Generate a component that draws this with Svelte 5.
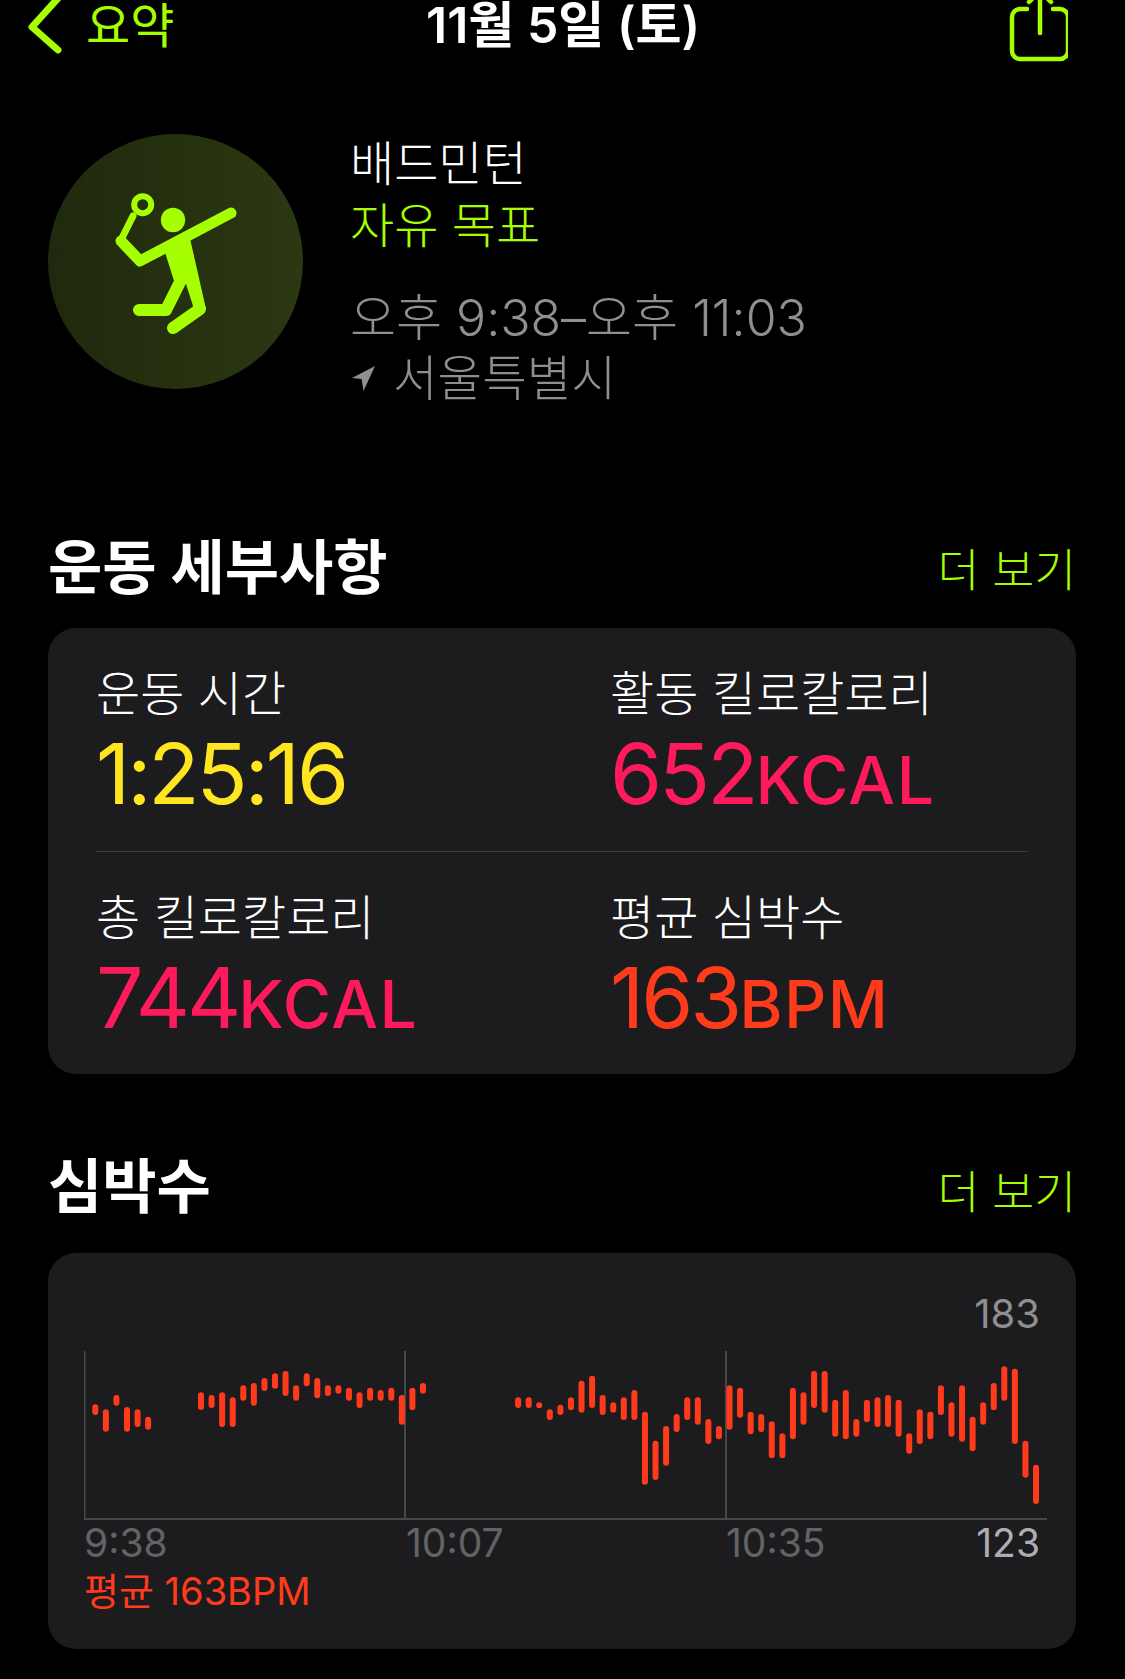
<script>
	const PITCH = 10.57;
	const TOP = 1352;

	// [top, bottom] of each minute's range, in screen px; null = no reading
	const raw = [
		[376, 408], [391, 458], [348, 380], [384, 458], [391, 444], [413, 452], null, null, null, null,
		[340, 393], [348, 387], [340, 444], [355, 444], [319, 365], [312, 380], [297, 336], [283, 329],
		[276, 351], [319, 365], [283, 322], [297, 358], [319, 351], [319, 344], [326, 365], [340, 387],
		[326, 365], [333, 365], [326, 365], [348, 437], [326, 394], [312, 344], null, null, null, null,
		null, null, null, null, [355, 387], [355, 387], [370, 387], [391, 423], [377, 408], [355, 394],
		[305, 401], [290, 387], [348, 408], [370, 401], [355, 423], [333, 423], [398, 617], [485, 603],
		[441, 560], [405, 459], [355, 423], [355, 437], [420, 495], [441, 481], [319, 452], [326, 416],
		[398, 466], [405, 459], [427, 538], [463, 538], [326, 481], [340, 437], [276, 387], [276, 401],
		[362, 473], [333, 481], [420, 473], [362, 430], [355, 444], [348, 444], [362, 473], [463, 524],
		[391, 495], [398, 481], [319, 408], [370, 473], [319, 488], [413, 517], [370, 437], [312, 394],
		[262, 365], [269, 495], [485, 596], [557, 675]
	];

	const bars = raw
		.map((r, i) => (r ? { x: 11.3 + i * PITCH, y: 1280 + r[0] / 3 - TOP, h: (r[1] - r[0]) / 3 } : null))
		.filter(Boolean);

	const stats = [
		{ label: '운동 시간', value: '1:25:16', unit: '', tone: 'yellow' },
		{ label: '활동 킬로칼로리', value: '652', unit: 'KCAL', tone: 'pink' },
		{ label: '총 킬로칼로리', value: '744', unit: 'KCAL', tone: 'pink' },
		{ label: '평균 심박수', value: '163', unit: 'BPM', tone: 'red' }
	];
</script>

<div class="page">
	<header class="nav">
		<div class="back">
			<svg class="chevron" viewBox="0 0 40 54" width="40" height="54">
				<polyline points="34,-4 6,27 32,50" />
			</svg>
			<span>요약</span>
		</div>
		<div class="title">11월 5일 (토)</div>
		<svg class="share" viewBox="0 0 64 64" width="64" height="64">
			<path d="M23 9h-7a8 8 0 0 0-8 8v34a8 8 0 0 0 8 8h40a8 8 0 0 0 8-8V17a8 8 0 0 0-8-8h-7" />
			<path d="M36 33V-6M25 2l11-11 11 11" />
		</svg>
	</header>

	<section class="hero">
		<svg class="badge" viewBox="48 134 255 255" width="255" height="255">
			<defs>
				<linearGradient id="badgeFill" x1="0" y1="0" x2="1" y2="0">
					<stop offset="0" stop-color="#1f290d" />
					<stop offset="1" stop-color="#2c3812" />
				</linearGradient>
			</defs>
			<circle cx="175.5" cy="261.5" r="127.5" fill="url(#badgeFill)" />
			<g fill="none" stroke="#a6ff00" stroke-linecap="round" stroke-linejoin="round">
				<circle cx="142.7" cy="204.7" r="8.5" stroke-width="6" />
				<path d="M133 216L121 240" stroke-width="7" />
				<path d="M121 241L140 261L231 213" stroke-width="11" />
				<path d="M139 310H166L182 278" stroke-width="12" />
				<path d="M200 309L173 328" stroke-width="12" />
			</g>
			<circle cx="173" cy="220" r="12.2" fill="#a6ff00" />
			<path d="M163 246L189 234L206 309L195 312L186 284L175 284Z" fill="#a6ff00" />
		</svg>
		<div class="info">
			<div class="name">배드민턴</div>
			<div class="goal">자유 목표</div>
			<div class="time">오후 9:38–오후 11:03</div>
			<div class="place">
				<svg viewBox="354 368 24 26" width="24" height="26">
					<path d="M377 368L354 380L363.6 381L365.5 393Z" />
				</svg>
				<span>서울특별시</span>
			</div>
		</div>
	</section>

	<div class="section-head first">
		<h2>운동 세부사항</h2>
		<span class="more">더 보기</span>
	</div>

	<section class="card stats">
		{#each stats as s, i}
			<div class="stat" class:lower={i > 1}>
				<div class="label">{s.label}</div>
				<div class="value {s.tone}">{s.value}<small>{s.unit}</small></div>
			</div>
		{/each}
		<div class="rule"></div>
	</section>

	<div class="section-head second">
		<h2>심박수</h2>
		<span class="more">더 보기</span>
	</div>

	<section class="card heart">
		<div class="max">183</div>
		<svg class="chart" viewBox="0 0 963 169" width="963" height="169">
			<line class="grid" x1="0.5" y1="0" x2="0.5" y2="168" />
			<line class="grid" x1="321" y1="0" x2="321" y2="168" />
			<line class="grid" x1="642" y1="0" x2="642" y2="168" />
			<line class="grid" x1="0" y1="168" x2="963" y2="168" />
			{#each bars as b}
				<rect x={b.x - 3} y={b.y} width="6" height={b.h} rx="3" fill="#ff3b1c" />
			{/each}
		</svg>
		<div class="ticks">
			<span>9:38</span>
			<span>10:07</span>
			<span>10:35</span>
			<span class="min">123</span>
		</div>
		<div class="avg">평균 163BPM</div>
	</section>
</div>

<style>
	:global(body) {
		margin: 0;
		background: #000;
	}

	.page {
		width: 1125px;
		height: 1679px;
		overflow: hidden;
		background: #000;
		color: #fff;
		font-family: 'Inter', 'Noto Sans CJK KR', sans-serif;
	}

	.nav {
		display: grid;
		grid-template-columns: 400px auto 1fr;
		align-items: start;
		height: 54px;
		padding: 0 57px 0 26px;
	}

	.back {
		display: flex;
		align-items: flex-start;
		gap: 20px;
		color: #a6ff00;
		font-size: 48px;
		line-height: 51px;
	}

	.chevron polyline,
	.share path {
		fill: none;
		stroke: #a6ff00;
		stroke-linecap: round;
		stroke-linejoin: round;
	}

	.chevron polyline {
		stroke-width: 7;
	}

	.share {
		justify-self: end;
	}

	.share path {
		stroke-width: 4.5;
	}

	.title {
		font-size: 50px;
		font-weight: 600;
		line-height: 50px;
	}

	.hero {
		display: flex;
		gap: 47px;
		margin: 80px 0 0 48px;
	}

	.info {
		margin-top: -1px;
		font-size: 48px;
		line-height: 62px;
		font-weight: 300;
	}

	.goal {
		color: #a6ff00;
	}

	.time {
		margin-top: 30px;
		color: #8e8e93;
		font-size: 50px;
	}

	.place {
		display: flex;
		align-items: center;
		gap: 17px;
		margin-top: -1px;
		color: #8e8e93;
		font-size: 48.5px;
	}

	.place svg {
		margin-left: 2px;
		fill: #8e8e93;
	}

	.section-head {
		display: flex;
		justify-content: space-between;
		align-items: center;
		padding: 0 49px 0 48px;
		height: 70px;
	}

	.section-head.first {
		margin-top: 118px;
	}

	.section-head.second {
		margin-top: 73px;
	}

	.section-head.second .more {
		margin-top: 14px;
	}

	h2 {
		margin: 0;
		font-size: 59px;
		font-weight: 700;
	}

	.more {
		margin-top: 8px;
		color: #a6ff00;
		font-size: 45.5px;
		font-weight: 300;
	}

	.card {
		margin: 0 49px 0 48px;
		border-radius: 28px;
		background: #1c1c1e;
	}

	.stats {
		position: relative;
		display: grid;
		grid-template-columns: 514px 1fr;
		height: 446px;
		margin-top: 30px;
		padding: 0 48px;
		box-sizing: border-box;
	}

	.stat {
		padding-top: 36px;
	}

	.stat.lower {
		padding-top: 37px;
	}

	.rule {
		position: absolute;
		left: 48px;
		right: 48px;
		top: 223px;
		height: 1px;
		background: #3a3a3c;
	}

	.label {
		font-size: 48px;
		font-weight: 300;
		line-height: 60px;
	}

	.value {
		margin-top: 2px;
		font-size: 84px;
		line-height: 96px;
		letter-spacing: -3px;
	}

	.value small {
		font-size: 66px;
		font-weight: 500;
		letter-spacing: 1.5px;
	}

	.yellow { color: #ffe620; }
	.pink { color: #ff1a5c; }
	.red { color: #ff3b1c; }

	.heart {
		height: 396px;
		margin-top: 36px;
		padding: 36px 36px 0 36px;
		box-sizing: border-box;
	}

	.max {
		height: 62px;
		color: #8e8e93;
		font-size: 40px;
		line-height: 50px;
		text-align: right;
	}

	.chart {
		display: block;
	}

	.grid {
		stroke: #48484a;
		stroke-width: 2;
	}

	.ticks {
		display: grid;
		grid-template-columns: 322px 320px 1fr auto;
		color: #636366;
		font-size: 39px;
		line-height: 46px;
	}

	.ticks .min {
		color: #aeaeb2;
	}

	.avg {
		color: #ff3b1c;
		font-size: 38px;
		line-height: 48px;
		font-weight: 400;
		margin-top: 1px;
	}
</style>
